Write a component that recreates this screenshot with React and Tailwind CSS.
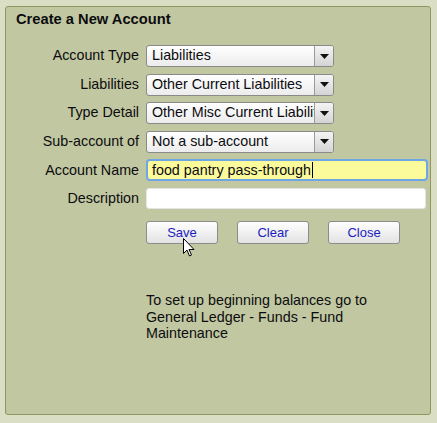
import React from 'react';

const fields = [
    { label: 'Account Type', value: 'Liabilities' },
    { label: 'Liabilities', value: 'Other Current Liabilities' },
    { label: 'Type Detail', value: 'Other Misc Current Liabilities' },
    { label: 'Sub-account of', value: 'Not a sub-account' },
];

const Select = ({ value }) => (
    <div className="relative flex h-[22px] w-[188px] items-center overflow-hidden rounded-[3px] border border-[#8a8a8a] bg-gradient-to-b from-white to-[#ececec]">
        <span className="w-[167px] overflow-hidden whitespace-nowrap pl-[5px]">{value}</span>
        <div className="absolute right-0 top-0 flex h-full w-[19px] items-center justify-center border-l border-[#9a9a9a] bg-gradient-to-b from-[#f4f4f4] to-[#d4d4d4]">
            <svg width="9" height="5" viewBox="0 0 9 5">
                <path d="M0 0h9L4.5 5z" fill="#111" />
            </svg>
        </div>
    </div>
);

const Row = ({ label, children }) => (
    <div className="flex items-center">
        <div className="w-[133px] text-right">{label}</div>
        <div className="ml-[7px]">{children}</div>
    </div>
);

const Button = ({ children }) => (
    <button className="h-[23px] w-[72px] rounded-[3px] border border-[#8c8c8c] bg-gradient-to-b from-white to-[#e2e2e2] text-[13px] text-[#1c1cc0]">
        {children}
    </button>
);

const App = () => {
    return (
        <div
            className="h-[423px] w-[437px] bg-[#dadec5] pl-[5px] pt-[6px] text-[14.3px] text-[#0c0c10]"
            style={{ fontFamily: '"Liberation Sans", Arial, sans-serif' }}
        >
            <div className="relative h-[409px] w-[426px] rounded-[3px] border border-[#8d985e] bg-[#c1c7a0]">
                <h1 className="pl-[10px] pt-[4px] text-[14.7px] font-bold leading-[16px]">Create a New Account</h1>

                <div className="mt-[18px] flex flex-col gap-[6.6px]">
                    {fields.map((f) => (
                        <Row key={f.label} label={f.label}>
                            <Select value={f.value} />
                        </Row>
                    ))}
                    <Row label="Account Name">
                        <div className="flex h-[22px] w-[282px] items-center rounded-[4px] border-2 border-[#6ea6e6] bg-[#fbfb9c] pl-[4px]">
                            food pantry pass-through
                            <span className="ml-[1px] inline-block h-[16px] w-px bg-black" />
                        </div>
                    </Row>
                    <Row label="Description">
                        <div className="h-[21px] w-[280px] rounded-[3px] border border-[#e4e4e4] bg-white" />
                    </Row>
                </div>

                <div className="ml-[140px] mt-[12px] flex gap-[19px]">
                    <Button>Save</Button>
                    <Button>Clear</Button>
                    <Button>Close</Button>
                </div>

                <p className="ml-[140px] mt-[48px] w-[250px] leading-[16.5px]">
                    To set up beginning balances go to General Ledger - Funds - Fund Maintenance
                </p>

                <svg
                    className="absolute left-[177px] top-[231px]"
                    width="12"
                    height="19"
                    viewBox="0 0 12 19"
                >
                    <path d="M0.5 0.5v15l3.5-3.5 2.5 6 2-1-2.5-5.5h5z" fill="#fff" stroke="#000" strokeWidth="1" />
                </svg>
            </div>
        </div>
    );
};

export default App;
